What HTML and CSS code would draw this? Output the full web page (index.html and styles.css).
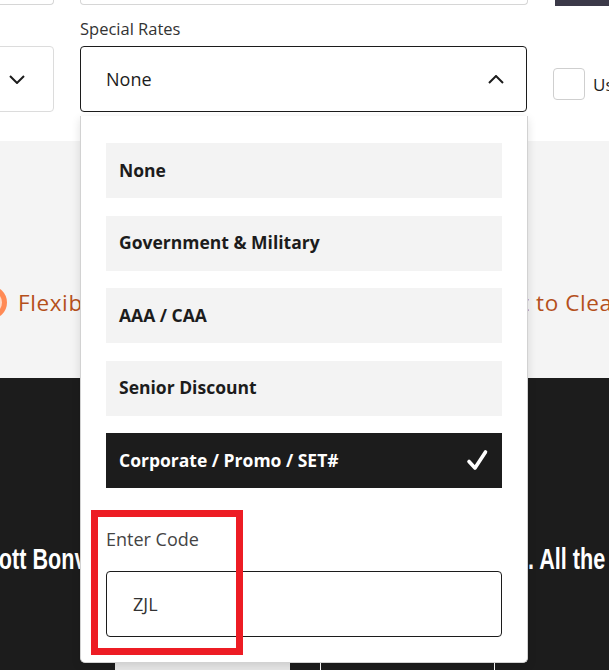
FILE: index.html
```html
<!DOCTYPE html>
<html lang="en">
<head>
<meta charset="utf-8">
<title>Special Rates</title>
<link rel="stylesheet" href="styles.css">
</head>
<body>
<div class="page">
  <header class="form">
    <div class="top-row">
      <div class="stub stub-left"></div>
      <div class="stub stub-mid"></div>
      <div class="stub stub-btn"></div>
    </div>
    <div class="field-row">
      <div class="sel sel-left">
        <svg class="chev" width="16" height="9" viewBox="0 0 16 9"><polyline points="1,1 8,8 15,1" fill="none" stroke="#1c1c1c" stroke-width="2"/></svg>
      </div>
      <div class="field special">
        <div class="label">Special Rates</div>
        <div class="sel sel-main">
          <span class="sel-value">None</span>
          <svg class="chev" width="16" height="9" viewBox="0 0 16 9"><polyline points="1,8 8,1 15,8" fill="none" stroke="#1c1c1c" stroke-width="2"/></svg>
        </div>
        <div class="menu">
          <ul class="options">
            <li class="option">None</li>
            <li class="option">Government &amp; Military</li>
            <li class="option">AAA / CAA</li>
            <li class="option">Senior Discount</li>
            <li class="option selected">Corporate / Promo / SET#
              <svg class="tick" width="22" height="22" viewBox="0 0 22 22"><path d="M3 12.5 L9 19 L19.5 3" fill="none" stroke="#fff" stroke-width="3.6" stroke-linecap="round" stroke-linejoin="round"/></svg>
            </li>
          </ul>
          <div class="code-label">Enter Code</div>
          <div class="code-input">ZJL</div>
          <div class="highlight"></div>
        </div>
      </div>
      <label class="check"><span class="box"></span><span class="check-text">Use Points</span></label>
    </div>
  </header>

  <section class="perks">
    <div class="perk perk-first">
      <span class="perk-icon"></span>
      <span class="perk-text">Flexible Cancellation</span>
    </div>
    <div class="perk perk-second"><span class="perk-hidden">Commitmen</span><span class="perk-text">t to Clean</span></div>
  </section>

  <section class="promo">
    <h2 class="promo-title">
      <span class="promo-left">Marriott Bonvoy for our best rates</span><span class="promo-right">. All the benefits</span>
    </h2>
    <div class="tabs">
      <div class="tab tab-active"></div>
      <div class="tab tab-line"></div>
      <div class="tab tab-line"></div>
    </div>
  </section>
</div>
</body>
</html>
```

FILE: styles.css
```css
* { box-sizing: border-box; }
html, body { margin: 0; padding: 0; }
body {
  width: 609px;
  height: 670px;
  overflow: hidden;
  background: #1c1c1c;
  font-family: "Open Sans", Lato, sans-serif;
  color: #1c1c1c;
}
.page { width: 609px; }

/* ---------- form header ---------- */
.form {
  position: relative;
  z-index: 2;
  height: 141px;
  background: #fff;
}
.top-row {
  display: flex;
  gap: 26px;
  height: 6px;
  margin-left: -20px;
}
.stub {
  flex-shrink: 0;
  height: 5px;
  border: 1px solid #d6d6d6;
  border-top: 0;
  border-radius: 0 0 4px 4px;
}
.stub-left { width: 74px; }
.stub-mid { width: 448px; }
.stub-btn {
  width: 60px;
  height: 6px;
  border: 0;
  border-radius: 0;
  background: #3b3948;
  margin-left: 1px;
}

.field-row {
  display: flex;
  align-items: flex-end;
  gap: 26px;
  margin-top: 14px;
  margin-left: -20px;
}
.sel {
  height: 66px;
  display: flex;
  align-items: center;
  border-radius: 4px;
}
.sel-left {
  flex: 0 0 74px;
  border: 1px solid #dcdcdc;
  padding-left: 28px;
}
.special {
  position: relative;
  flex: 0 0 447px;
}
.label {
  font-size: 16.5px;
  line-height: 18px;
  color: #333;
  margin-bottom: 8px;
}
.sel-main {
  border: 1px solid #1c1c1c;
  justify-content: space-between;
  padding: 0 22px 0 25px;
}
.sel-value {
  font-size: 18px;
  color: #1c1c1c;
}

.check {
  flex: 0 0 auto;
  display: flex;
  align-items: center;
  gap: 8px;
  margin-bottom: 12px;
  white-space: nowrap;
}
.box {
  width: 32px;
  height: 32px;
  border: 1px solid #cfcfcf;
  border-radius: 4px;
  flex: 0 0 32px;
}
.check-text { font-size: 17px; color: #1c1c1c; }

/* ---------- dropdown menu (overlay) ---------- */
.menu {
  position: absolute;
  top: 100%;
  left: 0;
  width: 448px;
  height: 547px;
  margin-top: 4px;
  background: #fff;
  border: 1px solid #d2d2d2;
  border-top: 0;
  border-radius: 0 0 5px 5px;
  box-shadow: 0 3px 10px rgba(0, 0, 0, 0.12);
  padding: 27px 25px 25px 25px;
}
.options {
  list-style: none;
  margin: 0;
  padding: 0;
  display: flex;
  flex-direction: column;
  gap: 17.5px;
}
.option {
  height: 55px;
  background: #f3f3f3;
  display: flex;
  align-items: center;
  justify-content: space-between;
  padding: 0 14px 2px 13px;
  font-size: 17.5px;
  font-weight: 700;
  color: #1c1c1c;
}
.option.selected {
  background: #1c1c1c;
  color: #fff;
}
.code-label {
  margin-top: 41px;
  font-size: 18px;
  line-height: 20px;
  color: #444;
}
.code-input {
  margin-top: 22px;
  height: 66px;
  border: 1px solid #1c1c1c;
  border-radius: 4px;
  display: flex;
  align-items: center;
  padding-left: 26px;
  font-size: 18px;
  color: #333;
}
.highlight {
  position: absolute;
  left: 10px;
  top: 394px;
  width: 152px;
  height: 145px;
  border: 7px solid #ed1c24;
}

/* ---------- perks band ---------- */
.perks {
  height: 237px;
  background: #f4f4f4;
  display: flex;
  align-items: center;
  padding-top: 86px;
  white-space: nowrap;
  overflow: hidden;
}
.perk {
  display: flex;
  align-items: center;
  font-size: 22.5px;
  letter-spacing: 0.6px;
  color: #b5501c;
}
.perk-first {
  margin-left: -26px;
  gap: 11px;
  flex: 0 0 447px;
  overflow: hidden;
}
.perk-hidden {
  display: inline-block;
  width: 100px;
  overflow: hidden;
}
.perk-icon {
  width: 33px;
  height: 33px;
  border-radius: 50%;
  border: 5px solid #ff8a55;
  background: #ffd8c4;
  flex: 0 0 33px;
}

/* ---------- promo band ---------- */
.promo {
  height: 292px;
  background: #1c1c1c;
  padding-top: 163px;
  overflow: hidden;
}
.promo-title {
  margin: 0;
  display: flex;
  white-space: nowrap;
  font-family: "Liberation Sans", Arial, sans-serif;
  font-weight: 700;
  font-size: 30px;
  line-height: 36px;
  color: #fff;
}
.promo-left,
.promo-right {
  display: block;
  transform: scaleX(0.72);
  transform-origin: left center;
}
.promo-left {
  flex: 0 0 582px;
  margin-left: -54px;
  overflow: hidden;
}
.promo-right { flex: 0 0 auto; }

.tabs {
  display: flex;
  margin-top: 86px;
  padding-left: 115px;
  height: 20px;
}
.tab { height: 20px; flex-shrink: 0; }
.tab-active {
  width: 175px;
  background: #e8e8e8;
  margin-right: 30px;
}
.tab-line {
  width: 174px;
  border-left: 1px solid #fff;
}
```
